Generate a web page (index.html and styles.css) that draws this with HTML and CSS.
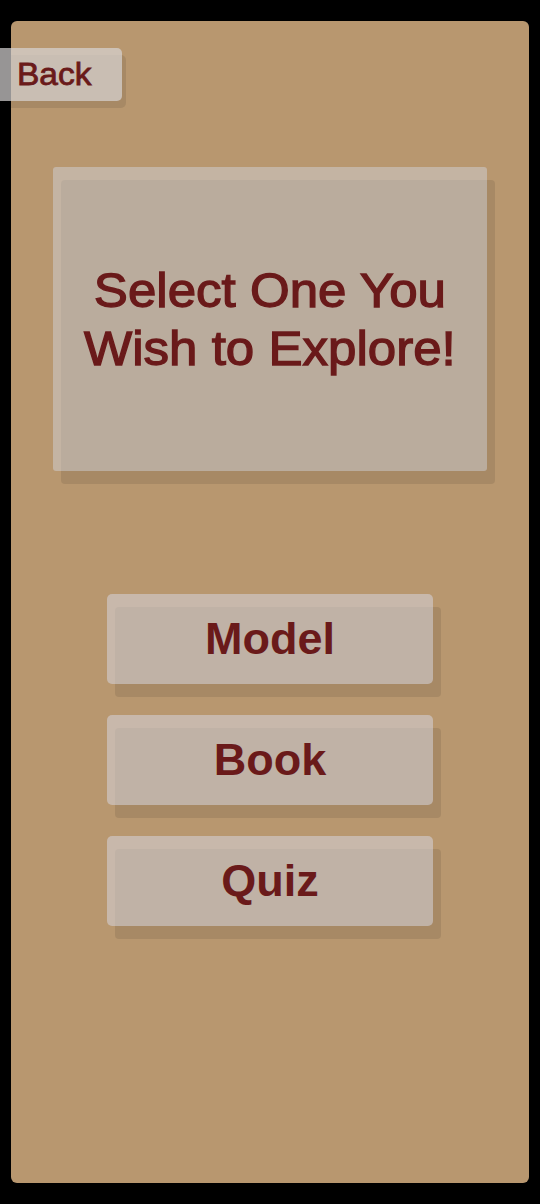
FILE: index.html
```html
<!DOCTYPE html>
<html>
<head>
<meta charset="utf-8">
<link rel="stylesheet" href="styles.css">
</head>
<body>
<div class="screen">
  <div class="panel">
    <div class="back"><span class="back-label">Back</span></div>
    <div class="card">
      <div class="title">Select One You<br>Wish to Explore!</div>
    </div>
    <div class="choices">
      <div class="choice">Model</div>
      <div class="choice">Book</div>
      <div class="choice">Quiz</div>
    </div>
  </div>
</div>
</body>
</html>
```

FILE: styles.css
```css
html, body {
  margin: 0;
  padding: 0;
  background: #000;
}
.screen {
  width: 540px;
  height: 1204px;
  padding: 21px 11px;
  box-sizing: border-box;
  font-family: "Liberation Sans", Arial, sans-serif;
}
.panel {
  position: relative;
  isolation: isolate;
  height: 1162px;
  background: #b8976f;
  border-radius: 6px;
  display: flex;
  flex-direction: column;
  align-items: flex-start;
}
.back {
  position: relative;
  margin-top: 27px;
  margin-left: -11px;
  width: 122px;
  height: 53px;
  box-sizing: border-box;
  padding-left: 17px;
  line-height: 53px;
  font-size: 31px;
  color: #6a1a1a;
  background: rgba(215, 212, 212, 0.7);
  border-radius: 0 5px 5px 0;
}
.back-label {
  display: inline-block;
  transform: scaleX(1.08);
  transform-origin: left center;
  -webkit-text-stroke: 0.8px #6a1a1a;
}
.back::before {
  content: "";
  position: absolute;
  left: 4px;
  top: 7px;
  width: 100%;
  height: 100%;
  border-radius: 5px;
  background: rgba(0, 0, 0, 0.09);
  z-index: -1;
}
.card {
  position: relative;
  margin-top: 66px;
  margin-left: 42px;
  width: 434px;
  height: 304px;
  border-radius: 3px;
  background: rgba(210, 214, 226, 0.45);
  display: flex;
  align-items: center;
  justify-content: center;
}
.card::before,
.choice::before {
  content: "";
  position: absolute;
  left: 8px;
  top: 13px;
  width: 100%;
  height: 100%;
  border-radius: 4px;
  background: rgba(0, 0, 0, 0.09);
  z-index: -1;
}
.title {
  text-align: center;
  font-size: 47.5px;
  font-weight: 400;
  -webkit-text-stroke: 1.3px #6a1a1a;
  transform: scaleX(1.075);
  line-height: 58px;
  color: #6a1a1a;
  margin-top: 2px;
}
.choices {
  margin-top: 123px;
  margin-left: 96px;
  display: flex;
  flex-direction: column;
  gap: 31px;
}
.choice {
  position: relative;
  width: 326px;
  height: 90px;
  border-radius: 5px;
  background: rgba(214, 212, 220, 0.55);
  text-align: center;
  line-height: 90px;
  font-size: 45px;
  font-weight: 700;
  color: #6a1a1a;
}
```
